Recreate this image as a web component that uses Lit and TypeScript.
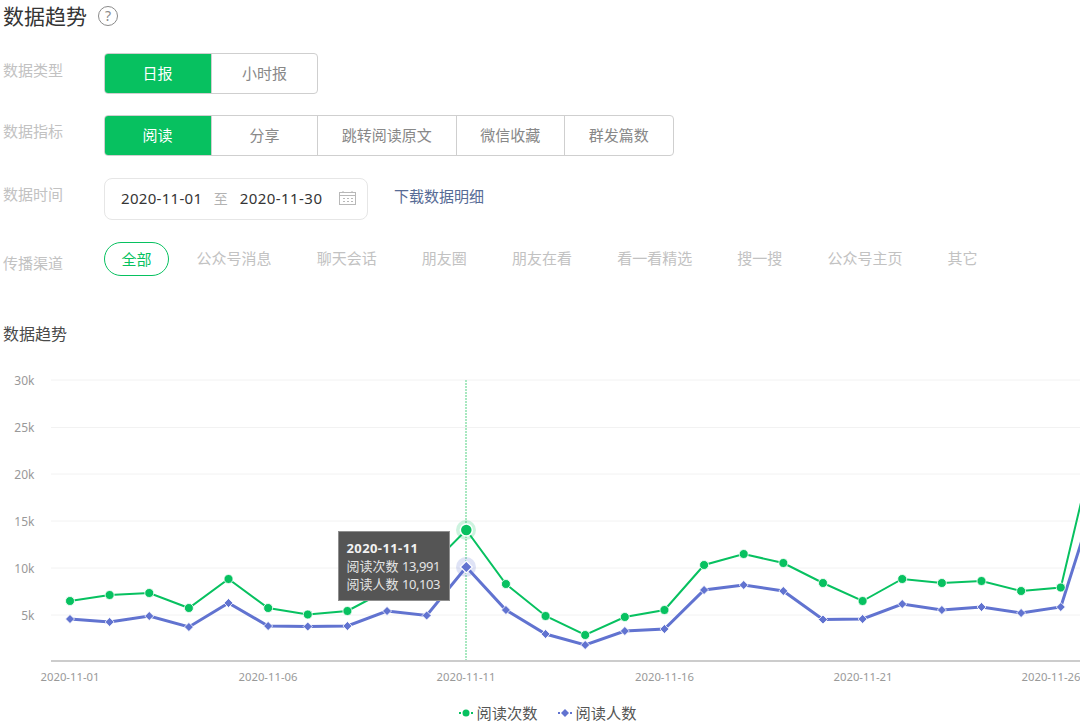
import {LitElement, html, css, svg} from 'lit';
import {customElement} from 'lit/decorators.js';

const reads = [601, 595, 593, 608, 579, 608, 614.5, 611, 590, 570, 530, 584, 616, 635, 617, 610, 565, 554, 563, 583, 601, 579, 583, 581, 591, 587.5, 421];
const readers = [619, 622, 616, 627, 603, 626, 626.5, 626, 611, 615.5, 567, 610, 634, 645, 631, 629, 590, 585, 591, 619.5, 619, 604, 610, 607, 613, 607, 482];
const yTicks: [string, number][] = [['30k', 380], ['25k', 427.5], ['20k', 474], ['15k', 521], ['10k', 568], ['5k', 615]];
const xTicks: [string, number][] = [['2020-11-01', 70], ['2020-11-06', 268], ['2020-11-11', 466], ['2020-11-16', 664.5], ['2020-11-21', 863], ['2020-11-26', 1051]];
const channels = ['公众号消息', '聊天会话', '朋友圈', '朋友在看', '看一看精选', '搜一搜', '公众号主页', '其它'];

const px = (i: number) => 70 + 39.63 * i;
const line = (ys: number[]) => ys.map((y, i) => `${px(i).toFixed(1)},${y}`).join(' ');

@customElement('app-root')
export class AppRoot extends LitElement {
    static styles = css`
        :host {
            display: block;
            width: 1080px;
            height: 723px;
            overflow: hidden;
            background: #fff;
            font-family: "Noto Sans", "Noto Sans CJK SC", sans-serif;
            color: #353535;
        }
        .title {
            display: flex;
            align-items: center;
            gap: 11px;
            height: 32px;
            padding-left: 3px;
            font-size: 21px;
            line-height: 32px;
        }
        .help {
            width: 20px;
            height: 20px;
            box-sizing: border-box;
            border: 1px solid #8a8a8a;
            border-radius: 50%;
            color: #8a8a8a;
            font-size: 14px;
            line-height: 18px;
            text-align: center;
        }
        .row {
            display: flex;
            padding-left: 3px;
        }
        .label {
            width: 101px;
            flex: none;
            font-size: 15px;
            line-height: 22px;
            color: #c2c2c2;
        }
        .group {
            display: flex;
            height: 41px;
            box-sizing: border-box;
            border: 1px solid #cfcfcf;
            border-radius: 4px;
            overflow: hidden;
        }
        .seg {
            min-width: 106px;
            padding: 0 23.75px;
            box-sizing: border-box;
            border-left: 1px solid #cfcfcf;
            font-size: 15px;
            line-height: 39px;
            text-align: center;
            color: #888;
        }
        .seg:first-child { border-left: 0; }
        .seg.on {
            margin: -1px 0 -1px -1px;
            width: 107px;
            line-height: 41px;
            background: #07c160;
            color: #fff;
        }
        .dates {
            display: flex;
            align-items: center;
            width: 264px;
            height: 42px;
            box-sizing: border-box;
            padding: 0 10px 2px 16px;
            border: 1px solid #e6e6e6;
            border-radius: 8px;
            font-size: 15px;
            letter-spacing: 0.3px;
        }
        .to {
            margin: 0 11.5px;
            color: #b2b2b2;
            font-size: 14px;
        }
        .end-date { letter-spacing: 0.45px; }
        .dates svg { margin-left: auto; }
        .link {
            margin-left: 26px;
            font-size: 15px;
            line-height: 37px;
            color: #576b95;
        }
        .pills {
            display: flex;
            align-items: center;
            font-size: 15px;
            color: #c2c2c2;
        }
        .pill {
            height: 34px;
            box-sizing: border-box;
            padding: 0 16px 0 16.5px;
            border: 1px solid #07c160;
            border-radius: 17px;
            line-height: 32px;
            color: #07c160;
            margin-right: 11px;
        }
        .pills span.ch {
            padding: 0 17px 3px;
            margin-right: 11.15px;
            line-height: 28px;
        }
        .subtitle {
            margin-top: 46px;
            padding-left: 3px;
            font-size: 16px;
            line-height: 24px;
            color: #4a4a4a;
        }
        .chart {
            position: relative;
            margin-top: 24px;
            height: 353px;
        }
        .chart svg.plot {
            display: block;
            font-family: "Noto Sans", sans-serif;
        }
        .tip {
            position: absolute;
            left: 337.5px;
            top: 161px;
            width: 112.5px;
            height: 70px;
            box-sizing: border-box;
            padding: 7px 0 0 8px;
            background: #555;
            border: 1px solid #8f8f8f;
            font-size: 13px;
            line-height: 18px;
            color: #e4e4e4;
            white-space: nowrap;
        }
        .tip b {
            display: block;
            color: #f2f2f2;
            font-weight: 700;
            letter-spacing: 0.4px;
        }
        .tip i {
            font-style: normal;
            letter-spacing: -0.4px;
        }
        .legend {
            position: absolute;
            left: 0;
            right: 0;
            top: 332px;
            display: flex;
            justify-content: center;
            gap: 20px;
            padding-left: 15px;
            font-size: 15.25px;
            line-height: 22px;
            color: #555;
        }
        .legend span {
            display: flex;
            align-items: center;
            gap: 4px;
        }
    `;

    render() {
        return html`
            <div class="title">数据趋势 <span class="help">?</span></div>
            <div class="row" style="margin-top:21px">
                <div class="label" style="margin-top:6px">数据类型</div>
                <div class="group">
                    <div class="seg on">日报</div>
                    <div class="seg">小时报</div>
                </div>
            </div>
            <div class="row" style="margin-top:21px">
                <div class="label" style="margin-top:5px">数据指标</div>
                <div class="group">
                    <div class="seg on">阅读</div>
                    <div class="seg">分享</div>
                    <div class="seg">跳转阅读原文</div>
                    <div class="seg">微信收藏</div>
                    <div class="seg">群发篇数</div>
                </div>
            </div>
            <div class="row" style="margin-top:22px">
                <div class="label" style="margin-top:5px">数据时间</div>
                <div class="dates">
                    <span>2020-11-01</span>
                    <span class="to">至</span>
                    <span class="end-date">2020-11-30</span>
                    <svg width="18" height="14" viewBox="0 0 18 14" fill="none" stroke="#b8b8b8">
                        <rect x="0.5" y="1.5" width="16" height="12"></rect>
                        <path d="M0.5 4.5h16M4 0v2M13 0v2"></path>
                        <path d="M4 7.5h2M8 7.5h2M12 7.5h2M4 10.5h2M8 10.5h2M12 10.5h2" stroke-width="1"></path>
                    </svg>
                </div>
                <div class="link">下载数据明细</div>
            </div>
            <div class="row" style="margin-top:22px">
                <div class="label" style="margin-top:10px">传播渠道</div>
                <div class="pills">
                    <div class="pill">全部</div>
                    ${channels.map((c) => html`<span class="ch">${c}</span>`)}
                </div>
            </div>
            <div class="subtitle">数据趋势</div>
            <div class="chart">
                ${this.renderPlot()}
                <div class="tip">
                    <b>2020-11-11</b>
                    阅读次数 <i>13,991</i><br />
                    阅读人数 <i>10,103</i>
                </div>
                <div class="legend">
                    <span>
                        <svg width="14" height="10" viewBox="0 0 14 10">
                            <path d="M0 5h14" stroke="#07c160" stroke-dasharray="2 10" stroke-width="2"></path>
                            <circle cx="7" cy="5" r="3.5" fill="#07c160"></circle>
                        </svg>
                        阅读次数
                    </span>
                    <span>
                        <svg width="14" height="10" viewBox="0 0 14 10">
                            <path d="M0 5h14" stroke="#6173d0" stroke-dasharray="2 10" stroke-width="2"></path>
                            <path d="M7 1l4 4-4 4-4-4z" fill="#6173d0"></path>
                        </svg>
                        阅读人数
                    </span>
                </div>
            </div>
        `;
    }

    renderPlot() {
        return html`
            <svg class="plot" width="1080" height="353" viewBox="0 370 1080 353">
                ${yTicks.map(([t, y]) => svg`
                    <line x1="51" x2="1080" y1=${y} y2=${y} stroke="#f2f2f2"></line>
                    <text x="34.5" y=${y + 4.5} text-anchor="end" font-size="12" fill="#999">${t}</text>
                `)}
                <line x1="466" x2="466" y1="380" y2="660" stroke="#a8e8c0" stroke-width="2" stroke-dasharray="2 1"></line>
                <line x1="51" x2="1080" y1="661" y2="661" stroke="#ccc" stroke-width="2"></line>
                ${xTicks.map(([t, x]) => svg`
                    <text x=${x} y="681" text-anchor="middle" font-size="11.3" fill="#999">${t}</text>
                `)}
                <polyline points=${line(reads)} fill="none" stroke="#07c160" stroke-width="2"></polyline>
                <polyline points=${line(readers)} fill="none" stroke="#6173d0" stroke-width="3"></polyline>
                <circle cx="466" cy="530" r="10" fill="#07c160" opacity="0.2"></circle>
                <circle cx="466" cy="567" r="10" fill="#6173d0" opacity="0.2"></circle>
                ${reads.map((y, i) => svg`
                    <circle cx=${px(i)} cy=${y} r=${i === 10 ? 6 : 4.5} fill="#07c160" stroke="#fff" stroke-width=${i === 10 ? 1.5 : 0.8}></circle>
                `)}
                ${readers.map((y, i) => {
                    const r = i === 10 ? 6 : 4.5;
                    const x = px(i);
                    return svg`<path d="M${x} ${y - r}l${r} ${r}-${r} ${r}-${r}-${r}z" fill="#6173d0" stroke="#fff" stroke-width=${i === 10 ? 1.2 : 0.8}></path>`;
                })}
            </svg>
        `;
    }
}
